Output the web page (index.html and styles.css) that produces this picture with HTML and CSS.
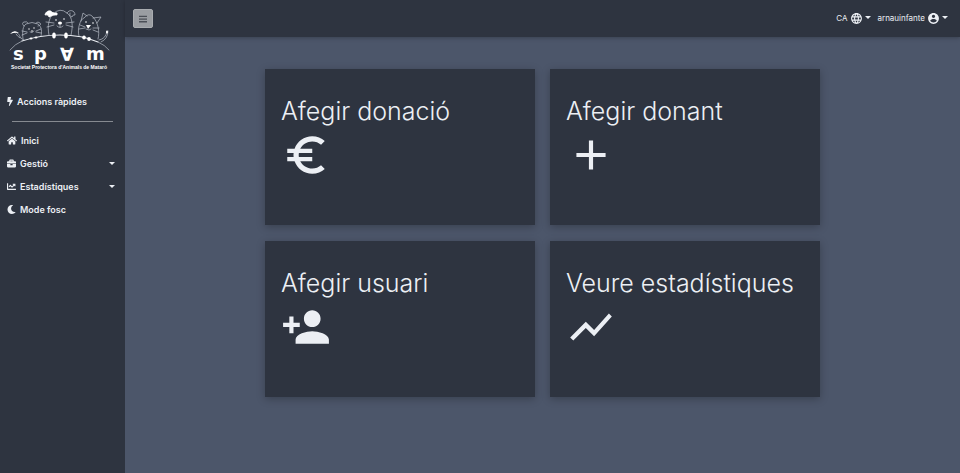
FILE: index.html
```html
<!DOCTYPE html>
<html lang="ca">
<head>
<meta charset="utf-8">
<meta name="viewport" content="width=device-width, initial-scale=1">
<title>SPAM - Accions ràpides</title>
<link rel="stylesheet" href="styles.css">
</head>
<body>
<div class="app">
  <aside class="sidebar">
    <a class="logo" href="#" aria-label="Societat Protectora d'Animals de Mataró">
      <svg viewBox="0 0 125 75" fill="none" stroke="#b9bec8" stroke-width="0.7" stroke-linecap="round">
        <path stroke="#eceff4" stroke-width="1.1" d="M22 41C34 37 47 35 60 35S87 37 98 42"/>
        <path d="M10 50Q15 44 22 41M98 42Q105 45 109 50"/>
        <g>
          <path d="M23 39C22 31 23 26 26 24Q32 21 38 24C42 27 42 32 41 36M24 26Q21 23 24 22T28 23M36 23Q38 21 40 23T38 26"/>
          <path d="M27 32L22 31M27 33L22 35M36 31L41 29M36 32L41 33M30 32Q32 34 34 31"/>
          <path d="M24 40C18 38 21 33 15 32M20 38Q17 36 16 34"/>
          <path fill="#fff" stroke="none" d="M10 34Q14 29 19 33Q15 32 10 34Z"/>
        </g>
        <g>
          <path d="M49 35C47 26 49 18 53 14Q60 7 67 13C73 17 73 27 71 35"/>
          <path fill="#fff" stroke="#fff" d="M52 12C50 9 45 12 45 15Q48 14 49 17C51 17 51 15 57 15Q58 12 55 13Z"/>
          <path d="M67 13C69 9 75 10 75 15Q73 14 72 17Q69 16 70 13M54 23L46 22M54 25L47 27M66 23L74 22M66 25L73 27M60 24V27M57 26Q60 29 63 26"/>
        </g>
        <g>
          <path d="M79 36C77 30 80 19 84 18Q89 12 93 17C98 22 100 32 98 39M81 21L83 13L87 16M93 18L101 17L97 23"/>
          <path d="M85 27L80 25M85 28L79 29M93 28L99 28M93 30L98 32M86 29L89 30L91 29"/>
          <path d="M99 40Q106 39 107 31M101 42Q108 39 108 31"/>
        </g>
        <g fill="#fff" stroke="none">
          <circle cx="29" cy="29" r="0.7"/><circle cx="34" cy="28" r="0.7"/><circle cx="32" cy="31" r="0.8"/>
          <circle cx="56" cy="20" r="0.8"/><circle cx="64" cy="19" r="0.8"/><ellipse cx="60" cy="23" rx="2" ry="1.5"/>
          <circle cx="86" cy="22" r="0.8"/><circle cx="93" cy="23" r="0.8"/><path d="M86 25H91L88 29Z"/>
          <ellipse cx="31" cy="38.500" rx="1.500" ry="1"/><ellipse cx="36" cy="37.500" rx="1.500" ry="1"/>
          <ellipse cx="54" cy="35.500" rx="1.800" ry="3"/><ellipse cx="66" cy="35.500" rx="1.800" ry="3"/>
          <ellipse cx="84" cy="37.500" rx="1.800" ry="2"/><ellipse cx="89" cy="39" rx="1.800" ry="2"/>
          <ellipse cx="107" cy="32" rx="1" ry="1.500"/>
        </g>
        <g class="logo-name"><text x="13" y="60">s</text><text x="34" y="60">p</text><text x="60" y="61">∀</text><text x="86" y="60">m</text></g>
        <text class="logo-tagline" x="11" y="69">Societat Protectora d'Animals de Mataró</text>
      </svg>
    </a>
    <nav class="menu">
      <a class="item" href="#"><svg class="bolt" viewBox="0 0 320 512"><path d="M296 160H180.600l42.600-129.800C227.200 15 215.700 0 200 0H56C44 0 33.800 8.900 32.200 20.800l-32 240C-1.700 275.200 9.500 288 24 288h118.700L96.600 482.500c-3.600 15.200 8 29.500 23.300 29.500 8.400 0 16.400-4.400 20.800-12l176-304c9.300-15.900-2.200-36-20.700-36z"/></svg>Accions ràpides</a>
      <hr>
      <a class="item" href="#"><svg class="home" viewBox="0 0 576 512"><path d="M280.370 148.260L96 300.110V464a16 16 0 0 0 16 16l112.060-.29a16 16 0 0 0 15.920-16V368a16 16 0 0 1 16-16h64a16 16 0 0 1 16 16v95.640a16 16 0 0 0 16 16.050L464 480a16 16 0 0 0 16-16V300L295.670 148.260a12.190 12.190 0 0 0-15.300 0zM571.600 251.470L488 182.560V44.050a12 12 0 0 0-12-12h-56a12 12 0 0 0-12 12v72.610L318.470 43a48 48 0 0 0-61 0L4.340 251.470a12 12 0 0 0-1.600 16.900l25.500 31A12 12 0 0 0 45.150 301l235.220-193.740a12.190 12.190 0 0 1 15.300 0L530.900 301a12 12 0 0 0 16.900-1.600l25.500-31a12 12 0 0 0-1.700-16.930z"/></svg>Inici</a>
      <button class="item" type="button"><svg viewBox="0 0 512 512"><path d="M320 336c0 8.840-7.160 16-16 16h-96c-8.840 0-16-7.160-16-16v-48H0v144c0 25.600 22.400 48 48 48h416c25.600 0 48-22.400 48-48V288H320v48zm144-208h-80V80c0-25.600-22.400-48-48-48H176c-25.600 0-48 22.400-48 48v48H48c-25.600 0-48 22.400-48 48v80h512v-80c0-25.600-22.400-48-48-48zm-144 0H192V96h128v32z"/></svg>Gestió<i class="caret"></i></button>
      <button class="item" type="button"><svg viewBox="0 0 512 512"><path d="M496 384H64V80c0-8.840-7.160-16-16-16H16C7.160 64 0 71.160 0 80v336c0 17.670 14.330 32 32 32h464c8.840 0 16-7.160 16-16v-32c0-8.840-7.160-16-16-16zM464 96H345.940c-21.380 0-32.090 25.850-16.970 40.970l32.400 32.400L288 242.750l-73.370-73.370c-12.500-12.500-32.760-12.500-45.250 0l-68.690 68.690c-6.250 6.250-6.250 16.380 0 22.630l22.620 22.620c6.250 6.250 16.380 6.250 22.630 0L192 237.250l73.370 73.370c12.500 12.500 32.760 12.500 45.250 0l96-96 32.400 32.400c15.120 15.120 40.970 4.410 40.970-16.970V112c.01-8.840-7.150-16-15.990-16z"/></svg>Estadístiques<i class="caret"></i></button>
      <button class="item" type="button"><svg viewBox="0 0 512 512"><path d="M283.211 512c78.962 0 151.079-35.925 198.857-94.792 7.068-8.708-.639-21.430-11.562-19.350-124.203 23.654-238.262-71.576-238.262-196.954 0-72.222 38.662-138.635 101.498-174.394 9.686-5.512 7.250-20.197-3.756-22.230A258.156 258.156 0 0 0 283.211 0c-141.309 0-256 114.511-256 256 0 141.309 114.511 256 256 256z"/></svg>Mode fosc</button>
    </nav>
  </aside>
  <div class="page">
    <header class="topbar">
      <button class="toggle" type="button" aria-label="Menú"><svg viewBox="0 0 8 8"><path d="M0 .7h8v1.300H0zM0 3.400h8v1.300H0zM0 6.100h8v1.300H0z"/></svg></button>
      <button class="drop" type="button">CA<svg viewBox="0 0 24 24"><path d="M11.990 2C6.470 2 2 6.480 2 12s4.470 10 9.990 10C17.520 22 22 17.520 22 12S17.520 2 11.990 2zm6.930 6h-2.950c-.32-1.250-.78-2.450-1.380-3.560 1.840.63 3.370 1.910 4.330 3.560zM12 4.040c.83 1.200 1.480 2.530 1.910 3.960h-3.820c.43-1.430 1.080-2.760 1.910-3.960zM4.260 14C4.100 13.360 4 12.690 4 12s.1-1.360.26-2h3.380c-.08.66-.14 1.320-.14 2s.06 1.340.14 2H4.260zm.82 2h2.950c.32 1.250.78 2.450 1.380 3.560-1.840-.63-3.370-1.900-4.330-3.560zm2.950-8H5.080c.96-1.660 2.490-2.930 4.330-3.560C8.810 5.550 8.350 6.750 8.030 8zM12 19.960c-.83-1.200-1.480-2.530-1.910-3.960h3.820c-.43 1.430-1.080 2.760-1.910 3.960zM14.340 14H9.660c-.09-.66-.16-1.320-.16-2s.07-1.350.16-2h4.680c.09.65.16 1.320.16 2s-.07 1.340-.16 2zm.25 5.560c.6-1.110 1.060-2.310 1.380-3.560h2.950c-.96 1.650-2.490 2.930-4.330 3.560zM16.360 14c.08-.66.14-1.320.14-2s-.06-1.340-.14-2h3.380c.16.640.26 1.310.26 2s-.1 1.360-.26 2h-3.380z"/></svg><i class="caret"></i></button>
      <button class="drop" type="button">arnauinfante<svg viewBox="0 0 24 24"><path d="M12 2C6.480 2 2 6.480 2 12s4.480 10 10 10 10-4.480 10-10S17.520 2 12 2zm0 3c1.660 0 3 1.340 3 3s-1.340 3-3 3-3-1.340-3-3 1.340-3 3-3zm0 14.200c-2.500 0-4.710-1.280-6-3.220.03-1.990 4-3.080 6-3.080 1.990 0 5.970 1.090 6 3.080-1.290 1.940-3.500 3.220-6 3.220z"/></svg><i class="caret"></i></button>
    </header>
    <main class="cards">
      <a class="card" href="#"><h2>Afegir donació</h2><svg viewBox="0 0 24 24"><path d="M15 18.500c-2.510 0-4.680-1.420-5.760-3.500H15v-2H8.580c-.05-.33-.08-.66-.08-1s.03-.67.08-1H15V9H9.240C10.320 6.920 12.500 5.500 15 5.500c1.610 0 3.090.59 4.230 1.570L21 5.300C19.410 3.870 17.300 3 15 3c-3.920 0-7.240 2.510-8.480 6H3v2h3.060c-.04.33-.06.66-.06 1s.02.67.06 1H3v2h3.520c1.240 3.490 4.560 6 8.480 6 2.310 0 4.410-.87 6-2.300l-1.780-1.770c-1.130.98-2.600 1.570-4.220 1.570z"/></svg></a>
      <a class="card" href="#"><h2>Afegir donant</h2><svg viewBox="0 0 24 24"><path d="M19 13h-6v6h-2v-6H5v-2h6V5h2v6h6v2z"/></svg></a>
      <a class="card" href="#"><h2>Afegir usuari</h2><svg viewBox="0 0 24 24"><path d="M15 12c2.210 0 4-1.790 4-4s-1.790-4-4-4-4 1.790-4 4 1.790 4 4 4zm-9-2V7H4v3H1v2h3v3h2v-3h3v-2H6zm9 4c-2.670 0-8 1.340-8 4v2h16v-2c0-2.660-5.330-4-8-4z"/></svg></a>
      <a class="card" href="#"><h2>Veure estadístiques</h2><svg viewBox="0 0 24 24"><path d="M3.500 18.490l6-6.010 4 4L22 6.920l-1.410-1.410-7.090 7.970-4-4L2 16.990z"/></svg></a>
    </main>
  </div>
</div>
</body>
</html>
```

FILE: styles.css
```css
* { box-sizing: border-box; }

body {
  margin: 0;
  background: #4c566a;
  color: #eceff4;
  font: 9px/15px Inter, "Liberation Sans", sans-serif;
}

a { color: inherit; text-decoration: none; }

button {
  border: 0;
  background: none;
  color: inherit;
  font: inherit;
  cursor: pointer;
}

svg { fill: currentColor; flex: none; }

.app { display: flex; min-height: 100vh; }

.sidebar { flex: 0 0 125px; background: #2e3440; }

.logo, .logo svg { display: block; width: 100%; }
.logo svg { fill: none; }

.logo text { fill: #fff; stroke: none; font-weight: 700; }
.logo-name { font: 18px "DejaVu Sans", sans-serif; }
.logo-tagline { font: 5px "Liberation Sans", sans-serif; }

.menu { padding: 15px 0; }

.menu hr {
  height: 1px;
  margin: 8px 12px 7px;
  border: 0;
  background: #868a91;
}

.item {
  display: flex;
  align-items: center;
  gap: 4px;
  width: 100%;
  height: 23px;
  padding: 0 10px 0 7px;
  font-weight: 600;
  text-align: left;
}

.item svg { width: 9px; height: 9px; }
.item .bolt { width: 6px; }
.item .home { width: 10px; }

.caret {
  margin-left: auto;
  border: 3px solid transparent;
  border-top-color: currentColor;
  border-bottom: 0;
}

.page { flex: 1; min-width: 0; }

.topbar {
  display: flex;
  align-items: center;
  gap: 7px;
  height: 37px;
  padding: 0 12px 0 8px;
  background: #2e3440;
  box-shadow: 0 1px 4px rgba(0, 0, 0, 0.25);
}

.toggle {
  display: grid;
  place-items: center;
  width: 20px;
  height: 19px;
  margin-right: auto;
  padding: 0;
  border: 1px solid #a9acb0;
  border-radius: 2px;
  background: #9a9da2;
  color: #4b4f57;
}

.toggle svg { width: 8px; height: 8px; }

.drop { display: flex; align-items: center; gap: 2px; padding: 0; font-size: 8px; }
.drop svg { width: 13px; height: 13px; }
.drop .caret { margin: 0 0 3px; }

.cards {
  display: grid;
  grid-template-columns: repeat(2, minmax(0, 1fr));
  gap: 16px 15px;
  max-width: 555px;
  margin: 32px auto;
}

.card {
  min-height: 156px;
  padding: 24px 16px;
  background: #2e3440;
  box-shadow: 0 2px 8px rgba(0, 0, 0, 0.25);
}

.card h2 { margin: 0 0 1px; font-size: 25px; line-height: 36px; font-weight: 300; }
.card svg { display: block; width: 50px; height: 50px; }
```
